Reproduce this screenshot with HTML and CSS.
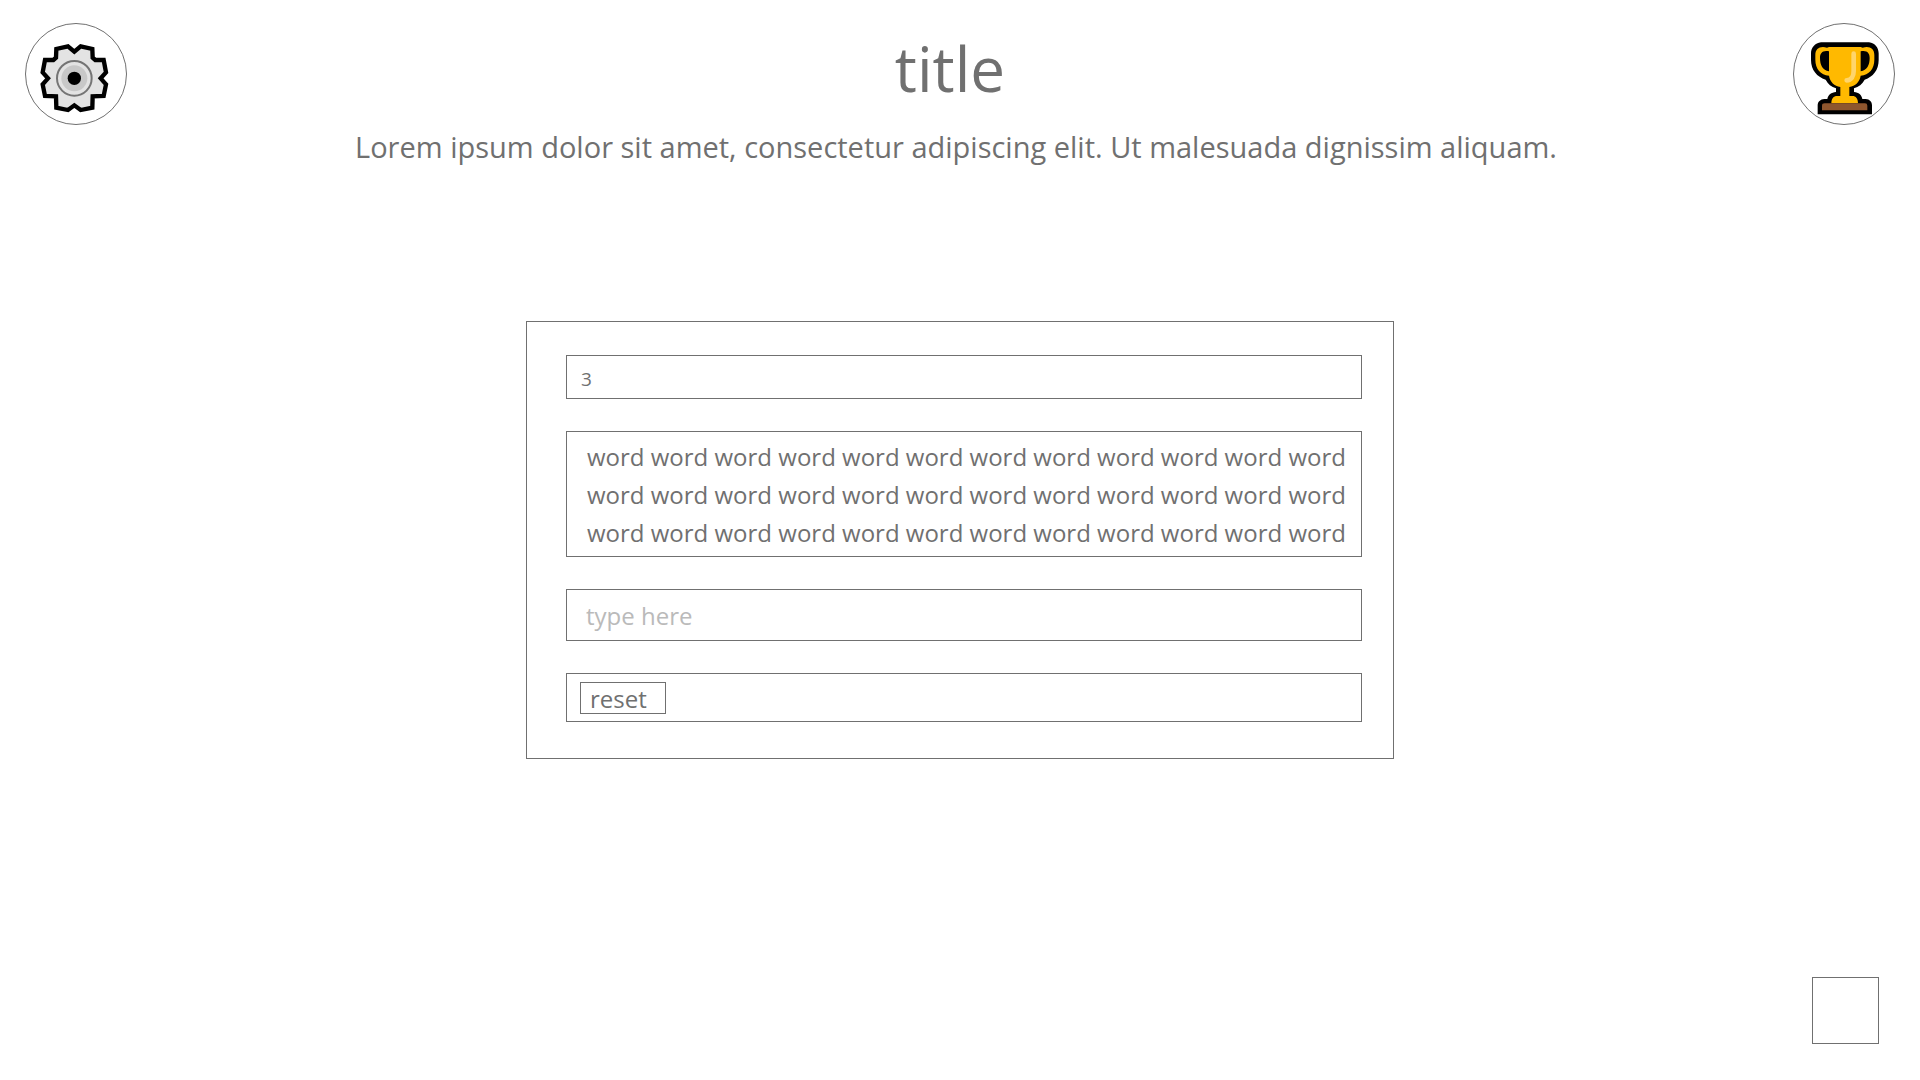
FILE: index.html
```html
<!DOCTYPE html>
<html lang="en">
<head>
  <meta charset="utf-8">
  <meta name="viewport" content="width=device-width, initial-scale=1">
  <title>title</title>
  <link rel="stylesheet" href="styles.css">
</head>
<body>
  <header class="top">
    <button class="round" type="button" aria-label="Settings">
      <svg class="icon" viewBox="33 27 300 300" aria-hidden="true">
        <path d="M159 94 L178 110 L197 94 L232 102 L233 128 L241 135 L266 135 L273 172 L257 190 L273 208 L266 243 L233 244 L232 278 L197 285 L178 271 L159 285 L124 278 L123 244 L90 243 L83 208 L99 190 L83 172 L90 135 L115 135 L123 128 L124 102 Z" fill="#e3e3e3" stroke="#000" stroke-width="13" stroke-linejoin="miter"/>
        <circle cx="178" cy="190" r="52" fill="#e3e3e3" stroke="#757575" stroke-width="6"/>
        <circle cx="178" cy="190" r="39" fill="#c8c8c8"/>
        <circle cx="178" cy="190" r="20" fill="#000"/>
      </svg>
    </button>
    <div class="heading">
      <h1 class="title">title</h1>
      <p class="lead">Lorem ipsum dolor sit amet, consectetur adipiscing elit. Ut malesuada dignissim aliquam.</p>
    </div>
    <button class="round" type="button" aria-label="High scores">
      <svg class="icon" viewBox="27 27 300 300" aria-hidden="true">
        <path d="M108 82 H252 C270 84 281 98 281 115 V135 C281 165 264 186 239 194 C232 207 221 216 207 220 V231 C221 232 230 240 232 252 H242 C254 253 261 260 261 271 V298 H98 V271 C98 260 106 253 118 252 H127 C129 240 139 232 153 231 V220 C139 216 129 207 122 194 C96 186 78 165 78 135 V115 C78 98 90 84 108 82 Z" fill="#000"/>
        <path d="M132 96 H227 L233 98 C254 92 268 101 268 120 V134 C268 162 252 179 227 182 C224 201 211 213 193 216 V243 H202 C213 243 219 251 219 265 H139 C139 251 145 243 157 243 H166 V216 C148 213 135 201 132 182 C107 179 91 162 91 134 V120 C91 101 105 92 126 98 Z" fill="#ffb900"/>
        <path d="M132 109 C113 105 105 114 105 129 C105 151 113 165 132 169 Z M227 109 C246 105 254 114 254 129 C254 151 246 165 227 169 Z" fill="#000"/>
        <path d="M206 116 V168 C206 184 199 196 185 196" fill="none" stroke="#ffd56b" stroke-width="14" stroke-linecap="round"/>
        <path d="M111 286 V272 Q111 265 119 265 H240 Q247 265 247 272 V286 Z" fill="#8e562e"/>
      </svg>
    </button>
  </header>

  <main class="card">
    <p class="panel count">3</p>
    <p class="panel words">word word word word word word word word word word word word<br>word word word word word word word word word word word word<br>word word word word word word word word word word word word</p>
    <input class="panel entry" type="text" placeholder="type here" aria-label="type here">
    <div class="panel actions">
      <button class="reset" type="button">reset</button>
    </div>
  </main>

  <footer class="bottom">
    <button class="square" type="button" aria-label="More"></button>
  </footer>
</body>
</html>
```
FILE: styles.css
```css
* {
  box-sizing: border-box;
}

body {
  margin: 0;
  min-height: 100vh;
  display: flex;
  flex-direction: column;
  background: #fff;
  color: #707070;
  font-family: "Open Sans", "Noto Sans", sans-serif;
  font-size: 24px;
}

h1,
p {
  margin: 0;
  font-weight: 400;
}

button,
input {
  font: inherit;
  color: inherit;
  background: #fff;
  border: 1px solid #707070;
  border-radius: 0;
  padding: 0;
}

.top {
  display: flex;
  align-items: flex-start;
  justify-content: space-between;
  padding: 23px 25px 0;
}

.round {
  flex: none;
  width: 102px;
  height: 102px;
  border-radius: 50%;
}

.icon {
  display: block;
  width: 100%;
}

.heading {
  flex: 1;
  text-align: center;
}

.title {
  padding-right: 20px;
  font-size: 62px;
  line-height: 90px;
}

.lead {
  margin-top: 10px;
  padding-right: 8px;
  font-size: 29px;
  line-height: 48px;
}

.card {
  display: flex;
  flex-direction: column;
  gap: 32px;
  width: 100%;
  max-width: 868px;
  margin: 150px auto 0;
  padding: 33px 31px 36px 39px;
  border: 1px solid #707070;
}

.panel {
  width: 100%;
  border: 1px solid #707070;
}

.count {
  padding: 5px 14px 1px;
  font-size: 19px;
  line-height: 36px;
}

.words {
  padding: 6px 20px 4px;
  line-height: 38px;
  white-space: nowrap;
}

.entry {
  height: 52px;
  padding: 0 19px;
}

.entry::placeholder {
  color: #bababa;
  opacity: 1;
}

.actions {
  padding: 8px 13px 7px;
}

.reset {
  display: block;
  width: 86px;
  height: 32px;
  padding: 1px 9px 0;
  line-height: 30px;
  text-align: left;
}

.bottom {
  display: flex;
  justify-content: flex-end;
  margin-top: auto;
  padding: 0 41px 36px;
}

.square {
  width: 67px;
  height: 67px;
}
```
